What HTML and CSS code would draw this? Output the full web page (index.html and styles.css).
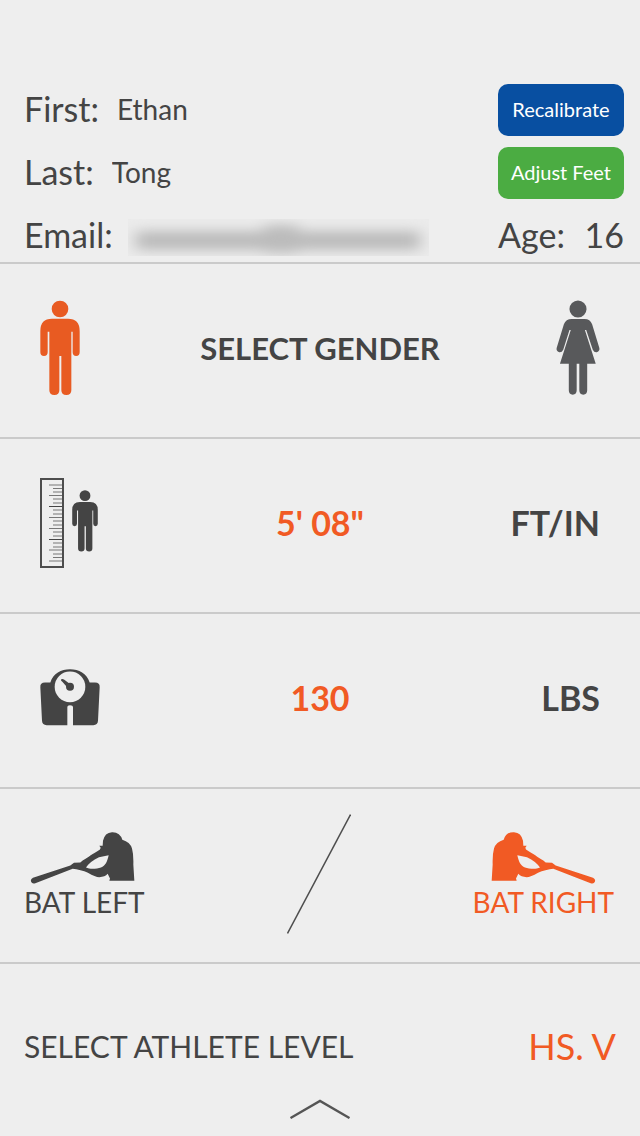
FILE: index.html
```html
<!DOCTYPE html>
<html lang="en">
<head>
<meta charset="utf-8">
<meta name="viewport" content="width=device-width, initial-scale=1">
<title>Athlete profile</title>
<link rel="stylesheet" href="styles.css">
</head>
<body>
<svg class="symbols" aria-hidden="true">
  <symbol id="man" viewBox="0 0 120 286">
    <circle cx="60" cy="26" r="25"/>
    <path d="M36 55H84Q119 55 119 92V156Q119 167 108.500 167Q98 167 98 156V94H94V270Q94 284 79 284Q64 284 64 270V167H58V270Q58 284 43 284Q28 284 28 270V94H23V156Q23 167 12 167Q1 167 1 156V92Q1 55 36 55Z"/>
  </symbol>
  <symbol id="woman" viewBox="0 0 134 290">
    <circle cx="67" cy="26" r="26"/>
    <path d="M48 57H87Q104 57 110 73L132 145Q134 153 126 157Q117 160 112 150L92 90H88L121 193H95V274Q95 287 83 287Q71 287 71 274V193H63V274Q63 287 51 287Q39 287 39 274V193H12L45 90H41L22 150Q17 160 8 157Q0 153 2 145L24 73Q30 57 48 57Z"/>
  </symbol>
  <symbol id="batter" viewBox="0 0 315 158">
    <path fill-rule="evenodd" d="M218 44L219 29Q224 4 246 3Q270 2 277 26Q300 33 306 52Q311 70 310 100L313 149H238L240 142L233 128Q225 138 208 138C190 137 178 124 163 120Q152 117 139 114L128 113L16 156Q6 159 3 151Q1 144 9 140L121 103L132 95L151 94L158 88C176 77 187 69 210 55L212 50L208 44ZM236 72L207 78C189 86 175 98 168 109C180 115 200 113 213 109C226 104 232 91 236 72Z"/>
  </symbol>
</svg>
<main class="profile">
  <form class="identity">
    <div class="field"><label class="field-label" for="first">First:</label><input class="field-input" id="first" value="Ethan"></div>
    <button class="action action-blue" type="button">Recalibrate</button>
    <div class="field"><label class="field-label" for="last">Last:</label><input class="field-input" id="last" value="Tong"></div>
    <button class="action action-green" type="button">Adjust Feet</button>
    <div class="field field-email"><span class="field-label">Email:</span>
      <svg class="redacted" viewBox="0 0 301 37" preserveAspectRatio="none" role="img" aria-label="Hidden email">
        <defs><filter id="soft" filterUnits="userSpaceOnUse" x="-30" y="-30" width="361" height="100"><feGaussianBlur stdDeviation="8 6"/></filter></defs>
        <rect width="301" height="37" fill="#ebebeb"/>
        <g filter="url(#soft)" fill="#bcbcbc"><rect x="8" y="12" width="284" height="19"/><rect x="136" y="6" width="34" height="28"/></g>
      </svg>
    </div>
    <div class="field field-age"><label class="field-label" for="age">Age:</label><input class="age-input" id="age" value="16" inputmode="numeric"></div>
  </form>

  <section class="row">
    <button class="plain" type="button" aria-label="Male" aria-pressed="true"><svg class="man"><use href="#man"/></svg></button>
    <h2 class="title">SELECT GENDER</h2>
    <button class="plain end" type="button" aria-label="Female" aria-pressed="false"><svg class="woman"><use href="#woman"/></svg></button>
  </section>

  <section class="row">
    <div class="height-icon">
      <svg class="ruler" viewBox="0 0 24 90" aria-hidden="true">
        <rect x="1" y="1" width="22" height="88" fill="none" stroke="#4d4d4d" stroke-width="2"/>
        <path d="M9 7H22M9 17.500H22M9 39.500H22M9 50.500H22M9 72H22M9 83H22M13 10.500H22M13 14H22M13 21H22M13 25H22M13 32H22M13 36H22M13 43H22M13 47H22M13 54H22M13 58H22M13 65H22M13 69H22M13 76H22M13 79.500H22" fill="none" stroke="#777"/>
        <path d="M9 28.500H22M9 61.500H22" stroke="#444" fill="none"/>
      </svg>
      <svg class="small-man" aria-hidden="true"><use href="#man"/></svg>
    </div>
    <button class="plain value" type="button">5' 08"</button>
    <button class="plain unit end" type="button">FT/IN</button>
  </section>

  <section class="row">
    <svg class="scale" viewBox="0 0 180 170" aria-hidden="true">
      <path d="M31 40C40 12 63 0 90 0C117 0 140 12 149 40H165Q180 40 179 54L174 155Q173 168 160 168H99V115Q99 108 90 108Q82 108 82 115V168H20Q7 168 6 155L1 54Q0 40 15 40Z"/>
      <circle cx="90" cy="53" r="46" fill="#eeeeee"/>
      <circle cx="90" cy="53" r="12"/>
      <path d="M63 31Q67 27 73 32L93 47L84 57L67 38Q62 35 63 31Z"/>
    </svg>
    <button class="plain value" type="button">130</button>
    <button class="plain unit end" type="button">LBS</button>
  </section>

  <section class="row row-bat">
    <button class="plain bat" type="button" aria-pressed="false"><svg class="batter"><use href="#batter"/></svg><span>BAT LEFT</span></button>
    <svg class="slash" viewBox="0 0 64 120" aria-hidden="true"><path d="M0.500 119.500L63.500 0.500" fill="none" stroke="#4d4d4d" stroke-width="1.500"/></svg>
    <button class="plain bat active end" type="button" aria-pressed="true"><svg class="batter flipped"><use href="#batter"/></svg><span>BAT RIGHT</span></button>
  </section>

  <section class="level">
    <div class="level-line"><h2 class="level-title">SELECT ATHLETE LEVEL</h2><button class="plain level-value" type="button">HS. V</button></div>
    <button class="plain expand" type="button" aria-label="Expand"><svg class="chevron" viewBox="0 0 60 20"><path d="M0.500 19L30 2L59.500 19" fill="none" stroke="#555" stroke-width="2.400"/></svg></button>
  </section>
</main>
</body>
</html>
```
FILE: styles.css
```css
* {
  box-sizing: border-box;
}

body {
  margin: 0;
  background: #eeeeee;
  color: #444444;
  font-family: Lato, "Noto Sans", sans-serif;
}

button,
input {
  font: inherit;
  color: inherit;
}

svg {
  display: block;
  fill: currentColor;
  flex-shrink: 0;
}

.symbols {
  position: absolute;
  width: 0;
  height: 0;
}

.identity {
  display: grid;
  grid-template-columns: 1fr 126px;
  grid-auto-rows: 52px;
  row-gap: 11px;
  padding: 84px 16px 0 24px;
  border-bottom: 2px solid #cacaca;
}

.field {
  display: flex;
  align-items: center;
  min-width: 0;
  padding-bottom: 3px;
  gap: 18px;
}

.field-email {
  gap: 15px;
}

.field-age {
  gap: 8px;
  justify-content: space-between;
}

.field-label {
  font-size: 34px;
  line-height: 40px;
  font-weight: 400;
}

.field-input,
.age-input {
  min-width: 0;
  padding: 0;
  border: 0;
  background: transparent;
  font-size: 28px;
  line-height: 40px;
}

.field-input {
  flex: 1;
}

.age-input {
  width: 40px;
  font-size: 34px;
  text-align: right;
}

.redacted {
  width: 301px;
  height: 37px;
  margin-top: 6px;
  flex-shrink: 1;
}

.action {
  padding: 0 0 2px;
  border: 0;
  border-radius: 10px;
  color: #ffffff;
  font-size: 20px;
}

.action-blue {
  background: #084fa1;
}

.action-green {
  background: #4bac42;
}

.plain {
  padding: 0;
  border: 0;
  background: transparent;
}

.row {
  display: grid;
  grid-template-columns: 1fr auto 1fr;
  align-items: center;
  justify-items: start;
  min-height: 175px;
  padding: 0 40px 6px;
  border-bottom: 2px solid #cacaca;
}

.end {
  justify-self: end;
}

.active {
  color: #f15a24;
}

.man {
  width: 40px;
  height: 96px;
  color: #e85b22;
}

.woman {
  width: 44px;
  height: 96px;
  color: #58595b;
}

.title {
  margin: 0;
  font-size: 31px;
  line-height: 40px;
  font-weight: 700;
}

.value,
.unit {
  font-size: 34px;
  line-height: 40px;
  font-weight: 700;
}

.value {
  color: #f15a24;
}

.height-icon {
  display: flex;
  align-items: flex-start;
  gap: 8px;
}

.ruler {
  width: 24px;
  height: 90px;
}

.small-man {
  width: 26px;
  height: 62px;
  margin-top: 12px;
}

.scale {
  width: 60px;
  height: 57px;
}

.row-bat {
  padding: 0 26px 4px 24px;
}

.bat {
  display: grid;
  padding-top: 4px;
  font-size: 28px;
  line-height: 36px;
  font-weight: 400;
}

.batter {
  width: 105px;
  height: 53px;
  margin-left: 6px;
}

.flipped {
  transform: scaleX(-1);
  margin-left: 18px;
}

.slash {
  width: 64px;
  height: 120px;
}

.level {
  display: grid;
  gap: 33px;
  padding: 62px 24px 16px;
}

.level-line {
  display: flex;
  align-items: center;
  justify-content: space-between;
}

.level-title {
  margin: 0;
  font-size: 30px;
  line-height: 40px;
  font-weight: 400;
}

.level-value {
  color: #f15a24;
  font-size: 36px;
  line-height: 40px;
  font-weight: 400;
}

.expand {
  justify-self: center;
}

.chevron {
  width: 60px;
  height: 20px;
}
```
